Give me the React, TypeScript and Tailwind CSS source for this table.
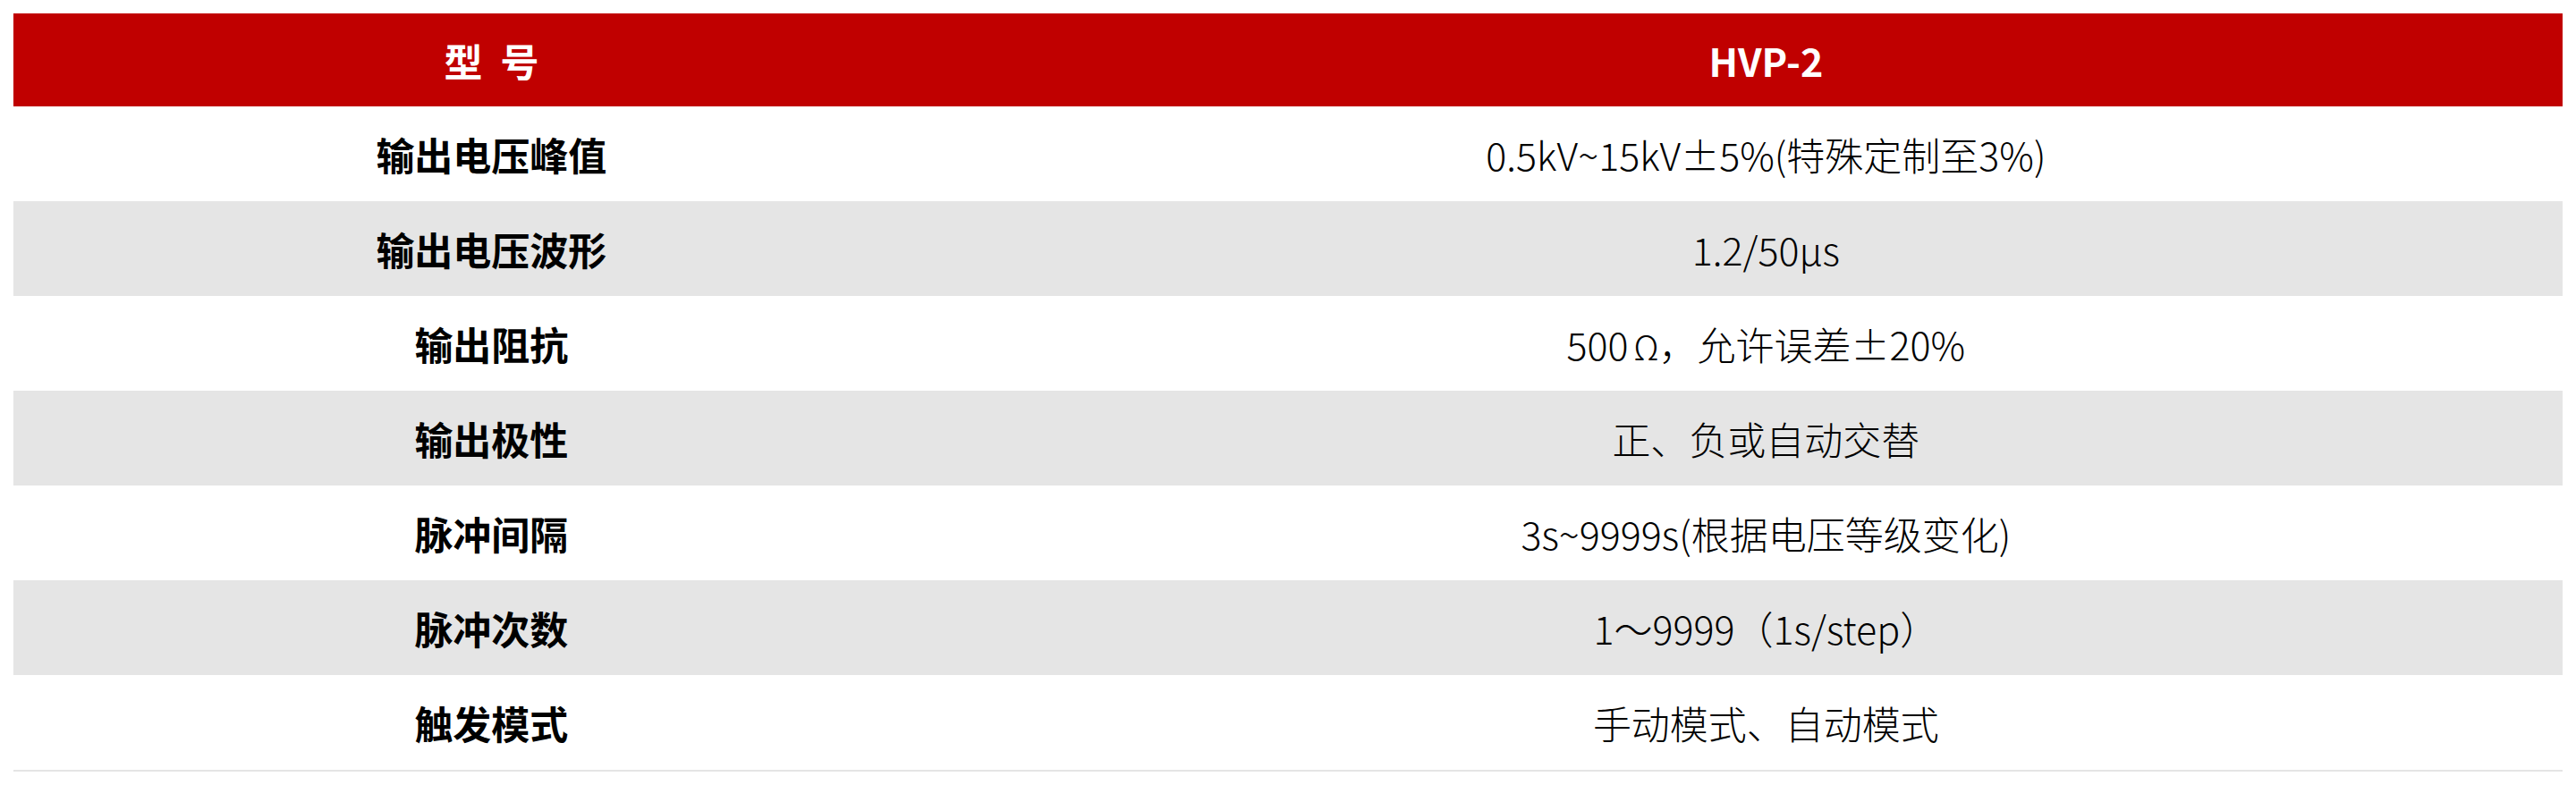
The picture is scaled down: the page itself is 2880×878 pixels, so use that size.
import React from "react";

const rows: [string, React.ReactNode][] = [
  ["输出电压峰值", "0.5kV~15kV±5%(特殊定制至3%)"],
  ["输出电压波形", "1.2/50μs"],
  [
    "输出阻抗",
    <>
      500<span className="ml-[6px] text-[38px]">Ω</span>，允许误差±20%
    </>,
  ],
  ["输出极性", "正、负或自动交替"],
  ["脉冲间隔", "3s~9999s(根据电压等级变化)"],
  ["脉冲次数", "1～9999（1s/step）"],
  ["触发模式", "手动模式、自动模式"],
];

export default function App() {
  return (
    <div
      className="w-[2880px] h-[878px] bg-white px-[15px] pt-[15px]"
      style={{ fontFamily: '"Noto Sans CJK SC", "Noto Sans", sans-serif' }}
    >
      <div className="w-full border-b-2 border-[#e5e5e5]">
        <div className="grid grid-cols-[37.5%_62.5%] h-[104px] bg-[#c00000] text-white font-bold text-[43px] items-center text-center">
          <div className="flex justify-center gap-[20px]">
            <span>型</span>
            <span>号</span>
          </div>
          <div>HVP-2</div>
        </div>
        {rows.map(([k, v], i) => (
          <div
            key={k}
            className={
              "grid grid-cols-[37.5%_62.5%] h-[106px] items-center text-center text-black text-[43px] " +
              (i % 2 === 1 ? "bg-[#e5e5e5]" : "bg-white")
            }
          >
            <div className="font-bold">{k}</div>
            <div className="font-light">{v}</div>
          </div>
        ))}
      </div>
    </div>
  );
}
